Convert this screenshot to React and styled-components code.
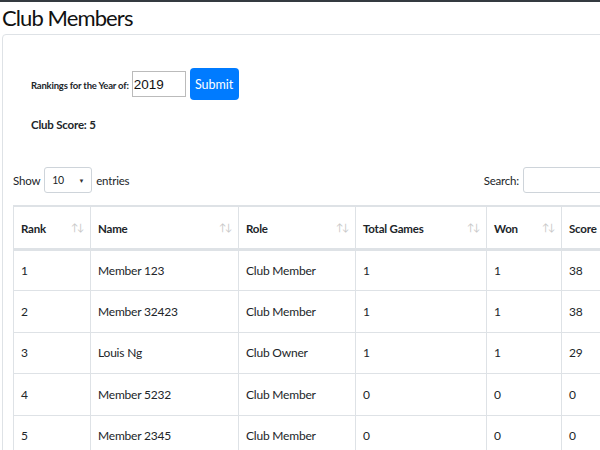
import React from "react";
import styled, { createGlobalStyle } from "styled-components";

const GlobalStyle = createGlobalStyle`
  body {
    margin: 0;
    font-family: Lato, "Open Sans", sans-serif;
    color: #212529;
    background: #fff;
    overflow: hidden;
  }
`;

export const TopBar = styled.div`
  height: 2px;
  background-color: #343a40;
`;

export const Title = styled.h1`
  margin: 0;
  padding-left: 2px;
  font-size: 22px;
  font-weight: 400;
  letter-spacing: -0.9px;
  line-height: 32px;
  color: #111;
`;

export const Card = styled.div`
  margin-left: 2px;
  width: 680px;
  border: 1px solid #dee2e6;
  border-radius: 4px;
  padding: 33px 0 0 10px;
  box-sizing: border-box;
`;

export const YearForm = styled.form`
  display: flex;
  align-items: center;
  padding-left: 18px;
`;

export const SmallLabel = styled.label`
  font-size: 9.5px;
  font-weight: 700;
  letter-spacing: -0.2px;
  margin-right: 3px;
  margin-top: 2px;
`;

export const YearInput = styled.input`
  width: 54px;
  height: 26px;
  box-sizing: border-box;
  border: 1px solid #bbb;
  padding: 0 1px;
  font-family: "Liberation Sans", sans-serif;
  font-size: 13.5px;
  color: #111;
`;

export const SubmitButton = styled.button`
  margin-left: 4px;
  height: 32px;
  width: 49px;
  background-color: #007bff;
  border: none;
  border-radius: 4px;
  color: white;
  font-family: Lato, sans-serif;
  font-size: 12.5px;
  padding: 0;
`;

export const ClubScore = styled.h5`
  margin: 18px 0 0 18px;
  font-size: 11.5px;
  font-weight: 700;
  letter-spacing: -0.2px;
`;

export const Controls = styled.div`
  display: flex;
  justify-content: space-between;
  align-items: center;
  margin-top: 36px;
  width: 600px;
  font-size: 11.5px;
  letter-spacing: -0.2px;
`;

export const LengthBox = styled.label`
  display: flex;
  align-items: center;
  gap: 4px;
`;

export const Select = styled.div`
  width: 48px;
  height: 26px;
  box-sizing: border-box;
  border: 1px solid #ced4da;
  border-radius: 3px;
  display: flex;
  align-items: center;
  justify-content: space-between;
  padding: 0 7px 0 7px;
  font-size: 10.5px;
`;

export const Caret = styled.span`
  font-size: 6px;
  color: #333;
`;

export const SearchBox = styled.label`
  display: flex;
  align-items: center;
  gap: 4px;
`;

export const SearchInput = styled.input`
  width: 90px;
  height: 26px;
  box-sizing: border-box;
  border: 1px solid #ced4da;
  border-radius: 3px;
`;

export const Table = styled.table`
  margin-top: 12px;
  border-collapse: collapse;
  table-layout: fixed;
  width: 640px;
  font-size: 12px;
  letter-spacing: -0.2px;
`;

export const HeadCell = styled.th`
  position: relative;
  width: ${(p) => p.w}px;
  height: 43px;
  box-sizing: border-box;
  border: 1px solid #dee2e6;
  border-bottom: 3px solid #dee2e6;
  border-top-width: 2px;
  text-align: left;
  padding: 3px 7px 0;
  font-size: 11.5px;
  font-weight: 700;
`;

export const SortArrows = styled.span`
  position: absolute;
  right: 7px;
  top: 14px;
  font-size: 10px;
  font-weight: 400;
  color: #c8c8c8;
  letter-spacing: -1.5px;
`;

export const Cell = styled.td`
  height: 41.5px;
  box-sizing: border-box;
  border: 1px solid #dee2e6;
  padding: 0 7px;
`;

const columns = [
  { label: "Rank", w: 77 },
  { label: "Name", w: 148 },
  { label: "Role", w: 117 },
  { label: "Total Games", w: 131 },
  { label: "Won", w: 75 },
  { label: "Score", w: 92 },
];

const members = [
  [1, "Member 123", "Club Member", 1, 1, 38],
  [2, "Member 32423", "Club Member", 1, 1, 38],
  [3, "Louis Ng", "Club Owner", 1, 1, 29],
  [4, "Member 5232", "Club Member", 0, 0, 0],
  [5, "Member 2345", "Club Member", 0, 0, 0],
];

const App = () => {
  return (
    <>
      <GlobalStyle />
      <TopBar />
      <Title>Club Members</Title>
      <Card>
        <YearForm onSubmit={(e) => e.preventDefault()}>
          <SmallLabel>Rankings for the Year of:</SmallLabel>
          <YearInput defaultValue="2019" />
          <SubmitButton>Submit</SubmitButton>
        </YearForm>
        <ClubScore>Club Score: 5</ClubScore>
        <Controls>
          <LengthBox>
            Show
            <Select>
              10 <Caret>▼</Caret>
            </Select>
            entries
          </LengthBox>
          <SearchBox>
            Search:
            <SearchInput />
          </SearchBox>
        </Controls>
        <Table>
          <thead>
            <tr>
              {columns.map((c) => (
                <HeadCell key={c.label} w={c.w}>
                  {c.label}
                  <SortArrows>↑↓</SortArrows>
                </HeadCell>
              ))}
            </tr>
          </thead>
          <tbody>
            {members.map((m) => (
              <tr key={m[0]}>
                {m.map((v, i) => (
                  <Cell key={i}>{v}</Cell>
                ))}
              </tr>
            ))}
          </tbody>
        </Table>
      </Card>
    </>
  );
};

export default App;
